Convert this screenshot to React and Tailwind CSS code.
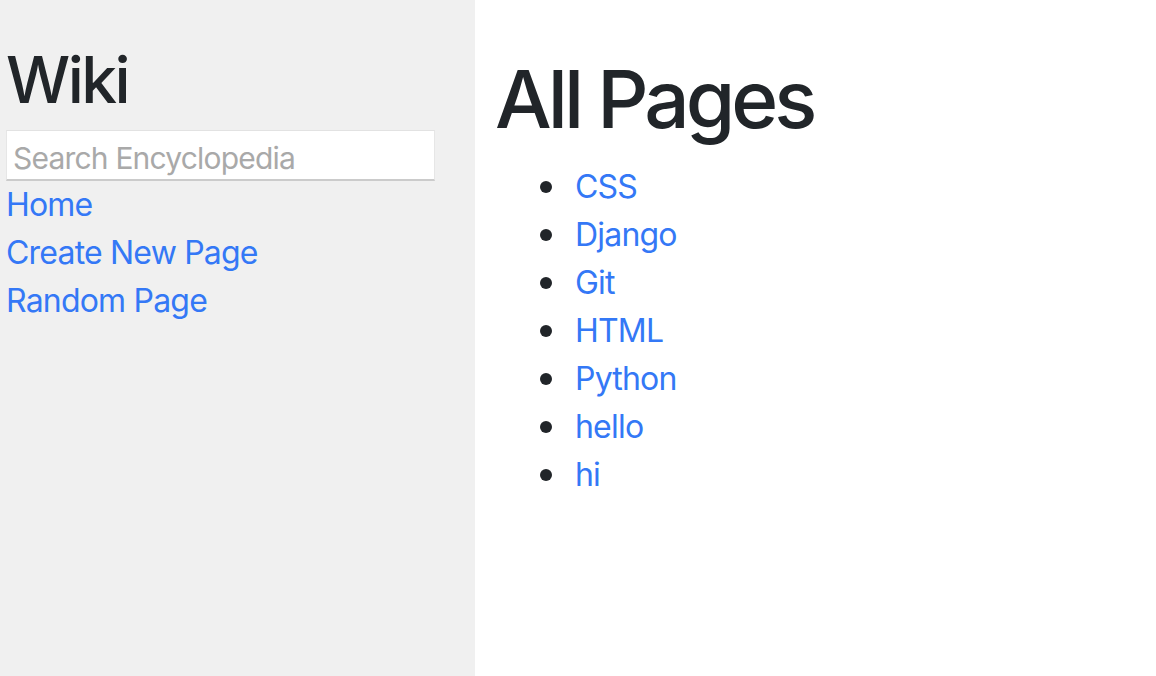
export default function App() {
  const pages = ["CSS", "Django", "Git", "HTML", "Python", "hello", "hi"];
  return (
    <div
      className="flex h-[676px] w-full text-[32px] leading-[48px] tracking-[-0.8px] text-[#212529]"
      style={{ fontFamily: "Inter, 'Noto Sans', sans-serif" }}
    >
      <div className="w-[475px] shrink-0 bg-[#f0f0f0] pl-[6px] pt-[41px]">
        <h2 className="mb-[12px] text-[64px] font-medium leading-[77px] tracking-[-2.5px]">Wiki</h2>
        <input
          type="text"
          placeholder="Search Encyclopedia"
          className="block h-[51px] w-[429px] border border-t-[#e2e2e2] border-l-[#e6e6e6] border-r-[#e6e6e6] border-b-2 border-b-[#cbcbcb] bg-white pl-[6px] pr-[6px] pt-[5px] pb-0 text-[30px] tracking-[-0.8px] placeholder:text-[#a9a9a9] outline-none"
        />
        <div className="flex flex-col">
          <a href="#" className="text-[#3478f6]">Home</a>
          <a href="#" className="text-[#3478f6]">Create New Page</a>
          <a href="#" className="text-[#3478f6]">Random Page</a>
        </div>
      </div>
      <div className="flex-1 bg-white pl-[20px] pt-[51px]">
        <h1 className="mb-[16px] text-[80px] font-medium leading-[96px] tracking-[-4px]">All Pages</h1>
        <ul className="pl-[45px]">
          {pages.map((p) => (
            <li key={p} className="flex items-center">
              <span className="mr-[23px] block h-[12px] w-[12px] shrink-0 rounded-full bg-[#212529]" />
              <a href="#" className="text-[#3478f6]">{p}</a>
            </li>
          ))}
        </ul>
      </div>
    </div>
  );
}
